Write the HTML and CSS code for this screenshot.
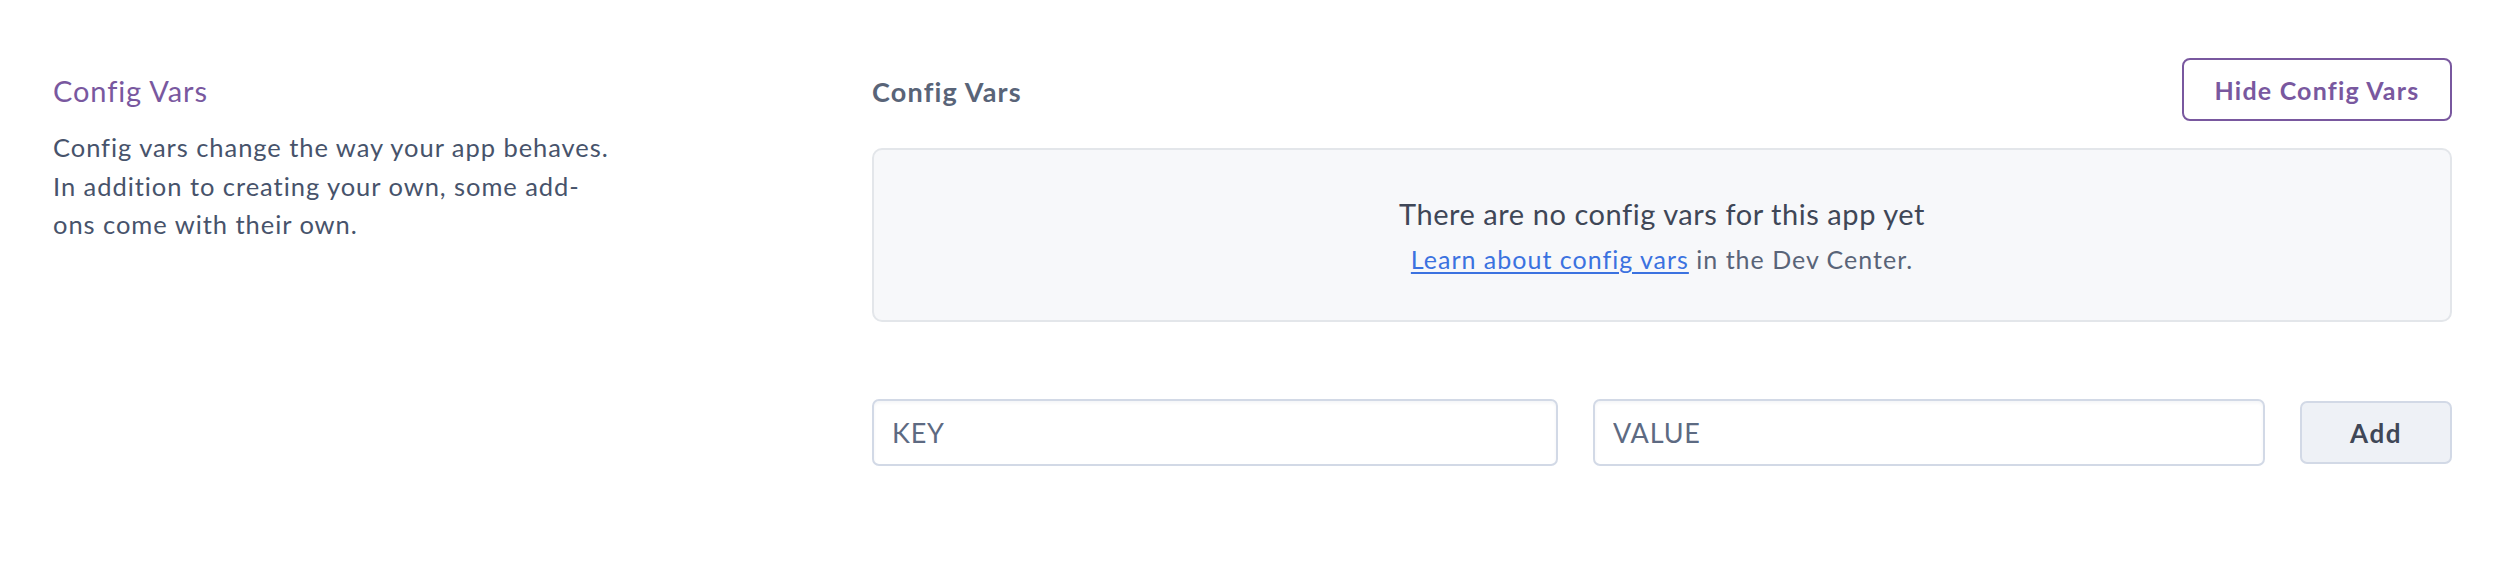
FILE: index.html
```html
<!DOCTYPE html>
<html lang="en">
<head>
<meta charset="utf-8">
<title>Config Vars</title>
<link rel="stylesheet" href="styles.css">
</head>
<body>
<section class="settings-section">
  <div class="section-info">
    <h2 class="section-title">Config Vars</h2>
    <p class="section-desc">Config vars change the way your app behaves. In addition to creating your own, some add-ons come with their own.</p>
  </div>
  <div class="section-body">
    <div class="body-header">
      <h3 class="body-title">Config Vars</h3>
      <button class="btn-outline" type="button">Hide Config Vars</button>
    </div>
    <div class="empty-state">
      <p class="empty-title">There are no config vars for this app yet</p>
      <p class="empty-sub"><a href="#" class="link">Learn about config vars</a> in the Dev Center.</p>
    </div>
    <form class="add-row">
      <input class="field" type="text" placeholder="KEY">
      <input class="field" type="text" placeholder="VALUE">
      <button class="btn-add" type="button">Add</button>
    </form>
  </div>
</section>
</body>
</html>
```

FILE: styles.css
```css
html, body {
  margin: 0;
  padding: 0;
  background: #ffffff;
}

body {
  font-family: Lato, "Noto Sans", "Liberation Sans", sans-serif;
  color: #3f4757;
}

.settings-section {
  display: flex;
  padding: 0 54px 0 53px;
}

.section-info {
  width: 819px;
  flex: none;
}

.section-title {
  margin: 71px 0 0;
  font-size: 29px;
  font-weight: 400;
  line-height: 40px;
  letter-spacing: 0.9px;
  color: #79589f;
}

.section-desc {
  margin: 17px 0 0;
  width: 560px;
  font-size: 25.5px;
  line-height: 38.5px;
  letter-spacing: 0.95px;
  color: #47536b;
}

.section-body {
  flex: 1;
  min-width: 0;
  padding-top: 58px;
}

.body-header {
  display: flex;
  align-items: center;
  justify-content: space-between;
  height: 63px;
}

.body-title {
  margin: 4px 0 0;
  font-size: 27px;
  font-weight: 700;
  letter-spacing: 1.2px;
  color: #596478;
}

.btn-outline {
  box-sizing: border-box;
  width: 270px;
  height: 63px;
  border: 2px solid #79589f;
  border-radius: 8px;
  background: #ffffff;
  color: #79589f;
  font-family: inherit;
  font-size: 25px;
  font-weight: 700;
  letter-spacing: 1.2px;
  cursor: pointer;
}

.empty-state {
  box-sizing: border-box;
  margin-top: 27px;
  height: 174px;
  border: 2px solid #e3e6ea;
  border-radius: 10px;
  background: #f7f8fa;
  text-align: center;
  padding-top: 46px;
}

.empty-title {
  margin: 0;
  font-size: 29px;
  line-height: 36px;
  letter-spacing: 0.55px;
  color: #3f4757;
}

.empty-sub {
  margin: 11px 0 0;
  font-size: 25px;
  line-height: 32px;
  letter-spacing: 1px;
  color: #596478;
}

.link {
  color: #3b72e0;
  text-decoration: underline;
  text-underline-offset: 3px;
}

.add-row {
  display: grid;
  grid-template-columns: 686fr 672fr 152px;
  column-gap: 35px;
  align-items: center;
  margin-top: 77px;
}

.field {
  box-sizing: border-box;
  width: 100%;
  height: 67px;
  padding: 0 18px;
  border: 2px solid #d2d9e6;
  border-radius: 7px;
  background: #ffffff;
  font-family: Lato, sans-serif;
  font-size: 27px;
  letter-spacing: 0.8px;
  color: #3f4757;
  box-shadow: inset 0 2px 3px rgba(60, 80, 120, 0.06);
}

.field::placeholder {
  color: #5d6a82;
}

.btn-add {
  box-sizing: border-box;
  height: 63px;
  border: 2px solid #d2d9e6;
  border-radius: 7px;
  background: #eef1f6;
  color: #3f4757;
  font-family: Lato, sans-serif;
  font-size: 26px;
  font-weight: 700;
  letter-spacing: 1.5px;
  cursor: pointer;
}
```
